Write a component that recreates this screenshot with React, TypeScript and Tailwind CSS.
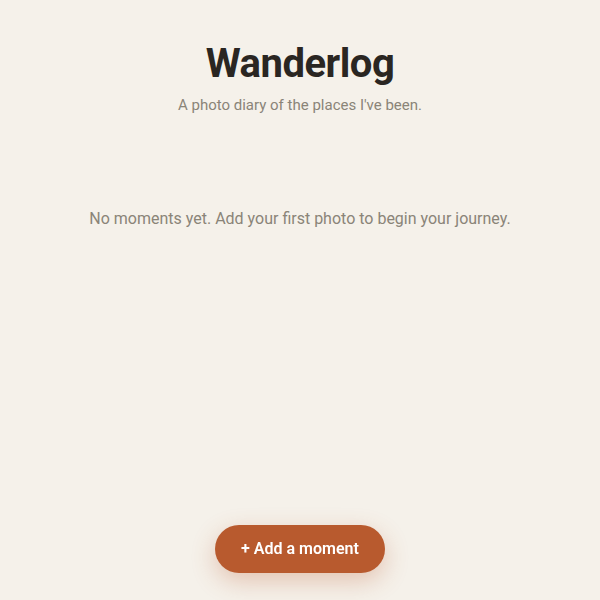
export default function App() {
  return (
    <div
      className="min-h-screen bg-[#f5f1ea] text-[#2a2622]"
      style={{ fontFamily: 'Roboto, "Liberation Sans", sans-serif' }}
    >
      <header className="pt-10 text-center">
        <h1 className="text-[40px] font-bold leading-[48px] tracking-[-0.5px] text-[#2a2622]">
          Wanderlog
        </h1>
        <p className="mt-[6px] text-[15px] leading-[22px] text-[#8a8478]">
          A photo diary of the places I've been.
        </p>
      </header>

      <main className="mt-[91px] px-6 text-center">
        <p className="text-base leading-6 text-[#8a8478]">
          No moments yet. Add your first photo to begin your journey.
        </p>
      </main>

      <div className="fixed inset-x-0 bottom-[27px] flex justify-center">
        <button className="rounded-full bg-[#b85a2e] px-[26px] py-3 text-base leading-6 font-semibold text-white shadow-[0_8px_24px_rgba(184,90,46,0.3)]">
          + Add a moment
        </button>
      </div>
    </div>
  );
}
